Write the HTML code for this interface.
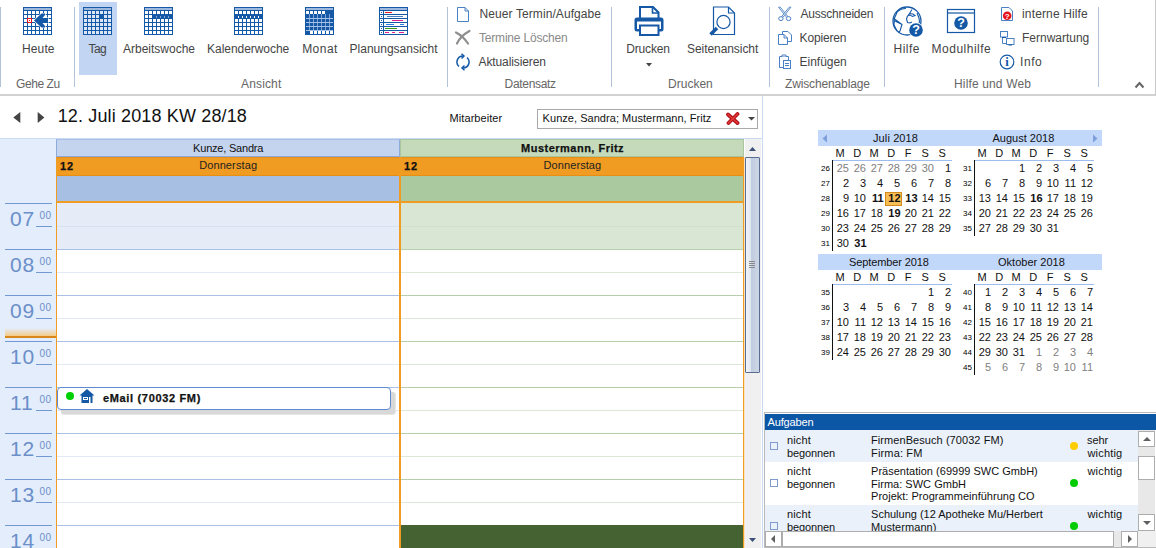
<!DOCTYPE html>
<html><head><meta charset="utf-8"><title>Kalender</title>
<style>
*{box-sizing:border-box;margin:0;padding:0}
html,body{width:1156px;height:548px;overflow:hidden;background:#fff}
body{position:relative;font-family:"Liberation Sans",sans-serif;font-size:12px;color:#444}
.abs{position:absolute}
.t{position:absolute;white-space:nowrap}
.sep{position:absolute;width:1px;background:#b3c3da;top:7px;height:80px}
.r{position:absolute}
</style></head><body>
<div class="r" style="left:0px;top:94px;width:1156px;height:2px;background:#d2d2d2;"></div>
<div class="r" style="left:1155px;top:0px;width:1px;height:95px;background:#c8c8c8;"></div>
<div class="sep" style="left:0px"></div>
<div class="sep" style="left:74px"></div>
<div class="sep" style="left:447px"></div>
<div class="sep" style="left:611px"></div>
<div class="sep" style="left:769px"></div>
<div class="sep" style="left:884px"></div>
<div class="sep" style="left:1098px"></div>
<div class="r" style="left:79px;top:2px;width:38px;height:73px;background:#c2d5f2;"></div>
<svg class="abs" style="left:23px;top:7px" width="29" height="28" viewBox="0 0 29 28" shape-rendering="crispEdges"><rect width="29" height="28" fill="#1458a6"/><rect x="1" y="1" width="27" height="2" fill="#9db9de"/><rect x="1" y="4" width="3" height="3" fill="#fff"/><rect x="5" y="4" width="3" height="3" fill="#fff"/><rect x="9" y="4" width="3" height="3" fill="#fff"/><rect x="13" y="4" width="3" height="3" fill="#fff"/><rect x="17" y="4" width="3" height="3" fill="#fff"/><rect x="21" y="4" width="3" height="3" fill="#fff"/><rect x="25" y="4" width="3" height="3" fill="#fff"/><rect x="1" y="8" width="3" height="3" fill="#fff"/><rect x="5" y="8" width="3" height="3" fill="#fff"/><rect x="9" y="8" width="3" height="3" fill="#fff"/><rect x="13" y="8" width="3" height="3" fill="#fff"/><rect x="17" y="8" width="3" height="3" fill="#fff"/><rect x="21" y="8" width="3" height="3" fill="#fff"/><rect x="25" y="8" width="3" height="3" fill="#fff"/><rect x="1" y="12" width="3" height="3" fill="#fff"/><rect x="5" y="12" width="3" height="3" fill="#fff"/><rect x="9" y="12" width="3" height="3" fill="#fff"/><rect x="13" y="12" width="3" height="3" fill="#fff"/><rect x="17" y="12" width="3" height="3" fill="#fff"/><rect x="21" y="12" width="3" height="3" fill="#fff"/><rect x="25" y="12" width="3" height="3" fill="#fff"/><rect x="1" y="16" width="3" height="3" fill="#fff"/><rect x="5" y="16" width="3" height="3" fill="#fff"/><rect x="9" y="16" width="3" height="3" fill="#fff"/><rect x="13" y="16" width="3" height="3" fill="#fff"/><rect x="17" y="16" width="3" height="3" fill="#fff"/><rect x="21" y="16" width="3" height="3" fill="#fff"/><rect x="25" y="16" width="3" height="3" fill="#fff"/><rect x="1" y="20" width="3" height="3" fill="#fff"/><rect x="5" y="20" width="3" height="3" fill="#fff"/><rect x="9" y="20" width="3" height="3" fill="#fff"/><rect x="13" y="20" width="3" height="3" fill="#fff"/><rect x="17" y="20" width="3" height="3" fill="#fff"/><rect x="21" y="20" width="3" height="3" fill="#fff"/><rect x="25" y="20" width="3" height="3" fill="#fff"/><rect x="1" y="24" width="3" height="3" fill="#fff"/><rect x="5" y="24" width="3" height="3" fill="#fff"/><rect x="9" y="24" width="3" height="3" fill="#fff"/><rect x="13" y="24" width="3" height="3" fill="#fff"/><rect x="17" y="24" width="3" height="3" fill="#fff"/><rect x="21" y="24" width="3" height="3" fill="#fff"/><rect x="25" y="24" width="3" height="3" fill="#fff"/><polygon shape-rendering="auto" points="11,13.5 18.5,6.5 22,6.5 22,8 19.5,11 25,11 25,16 19.5,16 22,19 22,20.5 18.5,20.5" fill="#1458a6" stroke="#fff" stroke-width="1.2" paint-order="stroke"/><rect x="4.5" y="11.5" width="4" height="4" fill="#fff" stroke="#e8141c" stroke-width="1"/><rect x="6" y="13" width="1" height="1" fill="#e8141c"/></svg>
<svg class="abs" style="left:83px;top:7px" width="29" height="28" viewBox="0 0 29 28" shape-rendering="crispEdges"><rect width="29" height="28" fill="#1458a6"/><rect x="1" y="1" width="27" height="2" fill="#9db9de"/><rect x="1" y="4" width="3" height="3" fill="#dbe6f7"/><rect x="5" y="4" width="3" height="3" fill="#dbe6f7"/><rect x="9" y="4" width="3" height="3" fill="#dbe6f7"/><rect x="13" y="4" width="3" height="3" fill="#dbe6f7"/><rect x="17" y="4" width="3" height="3" fill="#dbe6f7"/><rect x="21" y="4" width="3" height="3" fill="#dbe6f7"/><rect x="25" y="4" width="3" height="3" fill="#dbe6f7"/><rect x="1" y="8" width="3" height="3" fill="#dbe6f7"/><rect x="5" y="8" width="3" height="3" fill="#dbe6f7"/><rect x="9" y="8" width="3" height="3" fill="#dbe6f7"/><rect x="13" y="8" width="3" height="3" fill="#dbe6f7"/><rect x="21" y="8" width="3" height="3" fill="#dbe6f7"/><rect x="25" y="8" width="3" height="3" fill="#dbe6f7"/><rect x="1" y="12" width="3" height="3" fill="#dbe6f7"/><rect x="5" y="12" width="3" height="3" fill="#dbe6f7"/><rect x="9" y="12" width="3" height="3" fill="#dbe6f7"/><rect x="13" y="12" width="3" height="3" fill="#dbe6f7"/><rect x="17" y="12" width="3" height="3" fill="#dbe6f7"/><rect x="21" y="12" width="3" height="3" fill="#dbe6f7"/><rect x="25" y="12" width="3" height="3" fill="#dbe6f7"/><rect x="1" y="16" width="3" height="3" fill="#dbe6f7"/><rect x="5" y="16" width="3" height="3" fill="#dbe6f7"/><rect x="9" y="16" width="3" height="3" fill="#dbe6f7"/><rect x="13" y="16" width="3" height="3" fill="#dbe6f7"/><rect x="17" y="16" width="3" height="3" fill="#dbe6f7"/><rect x="21" y="16" width="3" height="3" fill="#dbe6f7"/><rect x="25" y="16" width="3" height="3" fill="#dbe6f7"/><rect x="1" y="20" width="3" height="3" fill="#dbe6f7"/><rect x="5" y="20" width="3" height="3" fill="#dbe6f7"/><rect x="9" y="20" width="3" height="3" fill="#dbe6f7"/><rect x="13" y="20" width="3" height="3" fill="#dbe6f7"/><rect x="17" y="20" width="3" height="3" fill="#dbe6f7"/><rect x="21" y="20" width="3" height="3" fill="#dbe6f7"/><rect x="25" y="20" width="3" height="3" fill="#dbe6f7"/><rect x="1" y="24" width="3" height="3" fill="#dbe6f7"/><rect x="5" y="24" width="3" height="3" fill="#dbe6f7"/><rect x="9" y="24" width="3" height="3" fill="#dbe6f7"/><rect x="13" y="24" width="3" height="3" fill="#dbe6f7"/><rect x="17" y="24" width="3" height="3" fill="#dbe6f7"/><rect x="21" y="24" width="3" height="3" fill="#dbe6f7"/><rect x="25" y="24" width="3" height="3" fill="#dbe6f7"/></svg>
<svg class="abs" style="left:144px;top:7px" width="29" height="28" viewBox="0 0 29 28" shape-rendering="crispEdges"><rect width="29" height="28" fill="#1458a6"/><rect x="1" y="1" width="27" height="2" fill="#9db9de"/><rect x="1" y="4" width="3" height="3" fill="#fff"/><rect x="5" y="4" width="3" height="3" fill="#fff"/><rect x="9" y="4" width="3" height="3" fill="#fff"/><rect x="13" y="4" width="3" height="3" fill="#fff"/><rect x="17" y="4" width="3" height="3" fill="#fff"/><rect x="21" y="4" width="3" height="3" fill="#fff"/><rect x="25" y="4" width="3" height="3" fill="#fff"/><rect x="1" y="8" width="3" height="3" fill="#fff"/><rect x="5" y="8" width="3" height="3" fill="#fff"/><rect x="1" y="12" width="3" height="3" fill="#fff"/><rect x="5" y="12" width="3" height="3" fill="#fff"/><rect x="9" y="12" width="3" height="3" fill="#fff"/><rect x="13" y="12" width="3" height="3" fill="#fff"/><rect x="17" y="12" width="3" height="3" fill="#fff"/><rect x="21" y="12" width="3" height="3" fill="#fff"/><rect x="25" y="12" width="3" height="3" fill="#fff"/><rect x="1" y="16" width="3" height="3" fill="#fff"/><rect x="5" y="16" width="3" height="3" fill="#fff"/><rect x="9" y="16" width="3" height="3" fill="#fff"/><rect x="13" y="16" width="3" height="3" fill="#fff"/><rect x="17" y="16" width="3" height="3" fill="#fff"/><rect x="21" y="16" width="3" height="3" fill="#fff"/><rect x="25" y="16" width="3" height="3" fill="#fff"/><rect x="1" y="20" width="3" height="3" fill="#fff"/><rect x="5" y="20" width="3" height="3" fill="#fff"/><rect x="9" y="20" width="3" height="3" fill="#fff"/><rect x="13" y="20" width="3" height="3" fill="#fff"/><rect x="17" y="20" width="3" height="3" fill="#fff"/><rect x="21" y="20" width="3" height="3" fill="#fff"/><rect x="25" y="20" width="3" height="3" fill="#fff"/><rect x="1" y="24" width="3" height="3" fill="#fff"/><rect x="5" y="24" width="3" height="3" fill="#fff"/><rect x="9" y="24" width="3" height="3" fill="#fff"/><rect x="13" y="24" width="3" height="3" fill="#fff"/><rect x="17" y="24" width="3" height="3" fill="#fff"/><rect x="21" y="24" width="3" height="3" fill="#fff"/><rect x="25" y="24" width="3" height="3" fill="#fff"/><rect x="12" y="9" width="1" height="2" fill="#7fa3d4"/><rect x="16" y="9" width="1" height="2" fill="#7fa3d4"/><rect x="20" y="9" width="1" height="2" fill="#7fa3d4"/><rect x="24" y="9" width="1" height="2" fill="#7fa3d4"/></svg>
<svg class="abs" style="left:234px;top:7px" width="29" height="28" viewBox="0 0 29 28" shape-rendering="crispEdges"><rect width="29" height="28" fill="#1458a6"/><rect x="1" y="1" width="27" height="2" fill="#9db9de"/><rect x="1" y="4" width="3" height="3" fill="#fff"/><rect x="5" y="4" width="3" height="3" fill="#fff"/><rect x="9" y="4" width="3" height="3" fill="#fff"/><rect x="13" y="4" width="3" height="3" fill="#fff"/><rect x="17" y="4" width="3" height="3" fill="#fff"/><rect x="21" y="4" width="3" height="3" fill="#fff"/><rect x="25" y="4" width="3" height="3" fill="#fff"/><rect x="1" y="12" width="3" height="3" fill="#fff"/><rect x="5" y="12" width="3" height="3" fill="#fff"/><rect x="9" y="12" width="3" height="3" fill="#fff"/><rect x="13" y="12" width="3" height="3" fill="#fff"/><rect x="17" y="12" width="3" height="3" fill="#fff"/><rect x="21" y="12" width="3" height="3" fill="#fff"/><rect x="25" y="12" width="3" height="3" fill="#fff"/><rect x="1" y="16" width="3" height="3" fill="#fff"/><rect x="5" y="16" width="3" height="3" fill="#fff"/><rect x="9" y="16" width="3" height="3" fill="#fff"/><rect x="13" y="16" width="3" height="3" fill="#fff"/><rect x="17" y="16" width="3" height="3" fill="#fff"/><rect x="21" y="16" width="3" height="3" fill="#fff"/><rect x="25" y="16" width="3" height="3" fill="#fff"/><rect x="1" y="20" width="3" height="3" fill="#fff"/><rect x="5" y="20" width="3" height="3" fill="#fff"/><rect x="9" y="20" width="3" height="3" fill="#fff"/><rect x="13" y="20" width="3" height="3" fill="#fff"/><rect x="17" y="20" width="3" height="3" fill="#fff"/><rect x="21" y="20" width="3" height="3" fill="#fff"/><rect x="25" y="20" width="3" height="3" fill="#fff"/><rect x="1" y="24" width="3" height="3" fill="#fff"/><rect x="5" y="24" width="3" height="3" fill="#fff"/><rect x="9" y="24" width="3" height="3" fill="#fff"/><rect x="13" y="24" width="3" height="3" fill="#fff"/><rect x="17" y="24" width="3" height="3" fill="#fff"/><rect x="21" y="24" width="3" height="3" fill="#fff"/><rect x="25" y="24" width="3" height="3" fill="#fff"/><rect x="4" y="9" width="1" height="2" fill="#fff"/><rect x="8" y="9" width="1" height="2" fill="#fff"/><rect x="12" y="9" width="1" height="2" fill="#fff"/><rect x="16" y="9" width="1" height="2" fill="#fff"/><rect x="20" y="9" width="1" height="2" fill="#fff"/><rect x="24" y="9" width="1" height="2" fill="#fff"/></svg>
<svg class="abs" style="left:305px;top:7px" width="29" height="28" viewBox="0 0 29 28" shape-rendering="crispEdges"><rect width="29" height="28" fill="#1458a6"/><rect x="1" y="1" width="27" height="2" fill="#9db9de"/><rect x="1" y="4" width="3" height="3" fill="#fff"/><rect x="5" y="4" width="3" height="3" fill="#fff"/><rect x="9" y="4" width="3" height="3" fill="#fff"/><rect x="13" y="4" width="3" height="3" fill="#fff"/><rect x="17" y="4" width="3" height="3" fill="#fff"/><rect x="5" y="24" width="3" height="3" fill="#fff"/><rect x="9" y="24" width="3" height="3" fill="#fff"/><rect x="13" y="24" width="3" height="3" fill="#fff"/><rect x="17" y="24" width="3" height="3" fill="#fff"/><rect x="21" y="24" width="3" height="3" fill="#fff"/><rect x="25" y="24" width="3" height="3" fill="#fff"/><rect x="4" y="7" width="1" height="17" fill="#7fa5d8"/><rect x="8" y="7" width="1" height="17" fill="#7fa5d8"/><rect x="12" y="7" width="1" height="17" fill="#7fa5d8"/><rect x="16" y="7" width="1" height="17" fill="#7fa5d8"/><rect x="20" y="7" width="1" height="17" fill="#7fa5d8"/><rect x="24" y="7" width="1" height="17" fill="#7fa5d8"/><rect x="1" y="11" width="27" height="1" fill="#a9c3e6"/><rect x="1" y="15" width="27" height="1" fill="#a9c3e6"/><rect x="1" y="19" width="27" height="1" fill="#a9c3e6"/><rect x="1" y="23" width="27" height="1" fill="#a9c3e6"/></svg>
<svg class="abs" style="left:379px;top:7px" width="29" height="28" viewBox="0 0 29 28" shape-rendering="crispEdges"><rect width="29" height="28" fill="#1458a6"/><rect x="1" y="1" width="27" height="2" fill="#9db9de"/><rect x="1" y="4" width="3" height="3" fill="#fff"/><rect x="2" y="5" width="1" height="1" fill="#1458a6"/><rect x="5" y="4" width="23" height="3" fill="#fff"/><rect x="6" y="5" width="7" height="1" fill="#f01818"/><rect x="1" y="8" width="3" height="3" fill="#fff"/><rect x="2" y="9" width="1" height="1" fill="#1458a6"/><rect x="5" y="8" width="23" height="3" fill="#fff"/><rect x="8" y="9" width="16" height="1" fill="#4a7fc1"/><rect x="1" y="12" width="3" height="3" fill="#fff"/><rect x="2" y="13" width="1" height="1" fill="#1458a6"/><rect x="5" y="12" width="23" height="3" fill="#fff"/><rect x="13" y="13" width="11" height="1" fill="#e0208c"/><rect x="1" y="16" width="3" height="3" fill="#fff"/><rect x="2" y="17" width="1" height="1" fill="#1458a6"/><rect x="5" y="16" width="23" height="3" fill="#fff"/><rect x="7" y="17" width="8" height="1" fill="#2a7de0"/><rect x="21" y="17" width="4" height="1" fill="#2a7de0"/><rect x="1" y="20" width="3" height="3" fill="#fff"/><rect x="2" y="21" width="1" height="1" fill="#1458a6"/><rect x="5" y="20" width="23" height="3" fill="#fff"/><rect x="6" y="21" width="12" height="1" fill="#3a9a1a"/><rect x="1" y="24" width="3" height="3" fill="#fff"/><rect x="2" y="25" width="1" height="1" fill="#1458a6"/><rect x="5" y="24" width="23" height="3" fill="#fff"/><rect x="6" y="25" width="4" height="1" fill="#e0208c"/><rect x="13" y="25" width="3" height="1" fill="#e0208c"/><rect x="20" y="25" width="5" height="1" fill="#e0208c"/></svg>
<svg class="abs" style="left:12px;top:111px" width="36" height="14" viewBox="0 0 36 14"><polygon points="1.3,6.5 8.3,1 8.3,12" fill="#444"/><polygon points="32.4,6.5 25.7,1 25.7,12" fill="#444"/></svg>
<div class="r" style="left:537px;top:109px;width:221px;height:20px;background:#fff;border:1px solid #a9a9a9"></div>
<svg class="abs" style="left:726px;top:112px" width="14" height="13" viewBox="0 0 14 13"><path d="M2 2.5 L11.5 11 M11.5 2 L2.5 11" stroke="#b01218" stroke-width="3.8" stroke-linecap="round"/><path d="M2 2.5 L11.5 11 M11.5 2 L2.5 11" stroke="#e23a3a" stroke-width="1.6" stroke-linecap="round"/></svg>
<svg class="abs" style="left:748px;top:117px" width="7" height="4" viewBox="0 0 7 4"><polygon points="0,0 7,0 3.5,3.5" fill="#444"/></svg>
<div class="r" style="left:0px;top:138px;width:762px;height:1px;background:#c9daf3;"></div>
<div class="r" style="left:0px;top:139px;width:56px;height:409px;background:#e3edfb;"></div>
<div class="r" style="left:56px;top:139px;width:344px;height:18px;background:#c4d4ee;border-top:1px solid #a9c0e6;border-left:1px solid #8eaadb;border-bottom:1px solid #8eaadb;border-right:1px solid #8eaadb"></div>
<div class="r" style="left:400px;top:139px;width:344px;height:18px;background:#c4dabb;border:1px solid #a9c69e"></div>
<div class="r" style="left:56px;top:157px;width:689px;height:19px;background:#f09b21;border-top:1px solid #e78f14;border-bottom:1px solid #e78f14"></div>
<div class="r" style="left:399px;top:157px;width:2px;height:19px;background:#e78f14;"></div>
<div class="r" style="left:57px;top:176px;width:342px;height:26px;background:#a6bfe3;"></div>
<div class="r" style="left:401px;top:176px;width:343px;height:26px;background:#abc99f;"></div>
<div class="r" style="left:56px;top:201px;width:689px;height:2px;background:#f09b21;"></div>
<div class="r" style="left:57px;top:203px;width:342px;height:345px;background:#fff;"></div>
<div class="r" style="left:401px;top:203px;width:343px;height:345px;background:#fff;"></div>
<div class="r" style="left:57px;top:203px;width:342px;height:46px;background:#e6ecf7;"></div>
<div class="r" style="left:401px;top:203px;width:343px;height:46px;background:#d9e6d3;"></div>
<div class="r" style="left:57px;top:226px;width:342px;height:1px;background:#d6e1f1;"></div>
<div class="r" style="left:401px;top:226px;width:343px;height:1px;background:#cfdfc8;"></div>
<div class="r" style="left:5px;top:203px;width:47px;height:1px;background:#7199d2;"></div>
<div class="r" style="left:36px;top:226px;width:16px;height:1px;background:#7199d2;"></div>
<div class="r" style="left:57px;top:249px;width:342px;height:1px;background:#a9c1e4;"></div>
<div class="r" style="left:401px;top:249px;width:343px;height:1px;background:#b4cfa9;"></div>
<div class="r" style="left:57px;top:272px;width:342px;height:1px;background:#e0e9f5;"></div>
<div class="r" style="left:401px;top:272px;width:343px;height:1px;background:#dbe8d5;"></div>
<div class="r" style="left:5px;top:249px;width:47px;height:1px;background:#7199d2;"></div>
<div class="r" style="left:36px;top:272px;width:16px;height:1px;background:#7199d2;"></div>
<div class="r" style="left:57px;top:295px;width:342px;height:1px;background:#a9c1e4;"></div>
<div class="r" style="left:401px;top:295px;width:343px;height:1px;background:#b4cfa9;"></div>
<div class="r" style="left:57px;top:318px;width:342px;height:1px;background:#e0e9f5;"></div>
<div class="r" style="left:401px;top:318px;width:343px;height:1px;background:#dbe8d5;"></div>
<div class="r" style="left:5px;top:295px;width:47px;height:1px;background:#7199d2;"></div>
<div class="r" style="left:36px;top:318px;width:16px;height:1px;background:#7199d2;"></div>
<div class="r" style="left:57px;top:341px;width:342px;height:1px;background:#a9c1e4;"></div>
<div class="r" style="left:401px;top:341px;width:343px;height:1px;background:#b4cfa9;"></div>
<div class="r" style="left:57px;top:364px;width:342px;height:1px;background:#e0e9f5;"></div>
<div class="r" style="left:401px;top:364px;width:343px;height:1px;background:#dbe8d5;"></div>
<div class="r" style="left:5px;top:341px;width:47px;height:1px;background:#7199d2;"></div>
<div class="r" style="left:36px;top:364px;width:16px;height:1px;background:#7199d2;"></div>
<div class="r" style="left:57px;top:387px;width:342px;height:1px;background:#a9c1e4;"></div>
<div class="r" style="left:401px;top:387px;width:343px;height:1px;background:#b4cfa9;"></div>
<div class="r" style="left:57px;top:410px;width:342px;height:1px;background:#e0e9f5;"></div>
<div class="r" style="left:401px;top:410px;width:343px;height:1px;background:#dbe8d5;"></div>
<div class="r" style="left:5px;top:387px;width:47px;height:1px;background:#7199d2;"></div>
<div class="r" style="left:36px;top:410px;width:16px;height:1px;background:#7199d2;"></div>
<div class="r" style="left:57px;top:433px;width:342px;height:1px;background:#a9c1e4;"></div>
<div class="r" style="left:401px;top:433px;width:343px;height:1px;background:#b4cfa9;"></div>
<div class="r" style="left:57px;top:456px;width:342px;height:1px;background:#e0e9f5;"></div>
<div class="r" style="left:401px;top:456px;width:343px;height:1px;background:#dbe8d5;"></div>
<div class="r" style="left:5px;top:433px;width:47px;height:1px;background:#7199d2;"></div>
<div class="r" style="left:36px;top:456px;width:16px;height:1px;background:#7199d2;"></div>
<div class="r" style="left:57px;top:479px;width:342px;height:1px;background:#a9c1e4;"></div>
<div class="r" style="left:401px;top:479px;width:343px;height:1px;background:#b4cfa9;"></div>
<div class="r" style="left:57px;top:502px;width:342px;height:1px;background:#e0e9f5;"></div>
<div class="r" style="left:401px;top:502px;width:343px;height:1px;background:#dbe8d5;"></div>
<div class="r" style="left:5px;top:479px;width:47px;height:1px;background:#7199d2;"></div>
<div class="r" style="left:36px;top:502px;width:16px;height:1px;background:#7199d2;"></div>
<div class="r" style="left:57px;top:525px;width:342px;height:1px;background:#a9c1e4;"></div>
<div class="r" style="left:401px;top:525px;width:343px;height:1px;background:#b4cfa9;"></div>
<div class="r" style="left:5px;top:525px;width:47px;height:1px;background:#7199d2;"></div>
<div class="r" style="left:401px;top:525px;width:343px;height:23px;background:#456332;"></div>
<div class="r" style="left:56px;top:157px;width:1px;height:391px;background:#f09b21;"></div>
<div class="r" style="left:399px;top:157px;width:2px;height:391px;background:#f09b21;"></div>
<div class="r" style="left:743px;top:157px;width:1px;height:391px;background:#f09b21;"></div>
<div class="r" style="left:744px;top:157px;width:1px;height:391px;background:#fbe3c0;"></div>
<div class="r" style="left:5px;top:328px;width:51px;height:9px;background:linear-gradient(#e3edfb,#f7c77a);"></div>
<div class="r" style="left:5px;top:336px;width:51px;height:2px;background:#d9861a;"></div>
<div class="r" style="left:61px;top:392px;width:335px;height:23px;background:#e6e6e6;border-radius:3px"></div>
<div class="r" style="left:61px;top:392px;width:334px;height:22px;background:#d8d8d8;border-radius:3px"></div>
<div class="r" style="left:57px;top:387px;width:334px;height:23px;background:#fff;border:1px solid #5d8ad0;border-radius:4px"></div>
<div class="r" style="left:66px;top:392px;width:8px;height:8px;background:#00d000;border-radius:50%"></div>
<svg class="abs" style="left:79px;top:389px" width="16" height="14" viewBox="0 0 16 14"><polygon points="8,0 0.5,6.5 15.5,6.5" fill="#1458a6"/><rect x="2.5" y="6" width="11" height="8" fill="#1458a6"/><rect x="4" y="8" width="5" height="3" fill="#fff"/><rect x="5" y="9" width="3" height="1" fill="#1458a6"/><rect x="10" y="8" width="1.5" height="6" fill="#fff"/></svg>
<div class="r" style="left:745px;top:139px;width:16px;height:409px;background:#f0f0f0;"></div>
<svg class="abs" style="left:749px;top:147px" width="7" height="4" viewBox="0 0 7 4"><polygon points="0,4 7,4 3.5,0" fill="#3d4f78"/></svg>
<svg class="abs" style="left:749px;top:538px" width="7" height="4" viewBox="0 0 7 4"><polygon points="0,0 7,0 3.5,4" fill="#3d4f78"/></svg>
<div class="r" style="left:745px;top:157px;width:15px;height:216px;background:linear-gradient(90deg,#f3f6fa 0,#dfe6f0 38%,#c0ccdf 42%,#ccd6e6 100%);border:1px solid #5a6c90;border-radius:1px"></div>
<div class="r" style="left:749px;top:261px;width:6px;height:1px;background:#8a8a8a;"></div>
<div class="r" style="left:749px;top:263px;width:6px;height:1px;background:#8a8a8a;"></div>
<div class="r" style="left:749px;top:265px;width:6px;height:1px;background:#8a8a8a;"></div>
<div class="r" style="left:749px;top:267px;width:6px;height:1px;background:#8a8a8a;"></div>
<div class="r" style="left:762px;top:96px;width:1px;height:452px;background:#c9daf3;"></div>
<div class="r" style="left:818px;top:130px;width:284px;height:16px;background:#c1d8fb;"></div>
<span class="t" style="left:833.2px;top:146.69px;width:14px;text-align:center;font-size:11px;line-height:13px;font-weight:400;color:#111">M</span>
<span class="t" style="left:850.2px;top:146.69px;width:14px;text-align:center;font-size:11px;line-height:13px;font-weight:400;color:#111">D</span>
<span class="t" style="left:867.2px;top:146.69px;width:14px;text-align:center;font-size:11px;line-height:13px;font-weight:400;color:#111">M</span>
<span class="t" style="left:884.2px;top:146.69px;width:14px;text-align:center;font-size:11px;line-height:13px;font-weight:400;color:#111">D</span>
<span class="t" style="left:901.2px;top:146.69px;width:14px;text-align:center;font-size:11px;line-height:13px;font-weight:400;color:#111">F</span>
<span class="t" style="left:918.2px;top:146.69px;width:14px;text-align:center;font-size:11px;line-height:13px;font-weight:400;color:#111">S</span>
<span class="t" style="left:935.2px;top:146.69px;width:14px;text-align:center;font-size:11px;line-height:13px;font-weight:400;color:#111">S</span>
<div class="r" style="left:832px;top:160px;width:120px;height:1px;background:#9dbdf0;"></div>
<div class="r" style="left:832px;top:160px;width:1px;height:91px;background:#111;"></div>
<span class="t" style="left:819.0px;top:163.73px;width:11px;text-align:right;font-size:8px;line-height:10px;font-weight:400;color:#000">26</span>
<span class="t" style="left:829.0px;top:161.69px;width:20px;text-align:right;font-size:11px;line-height:13px;font-weight:400;color:#808080">25</span>
<span class="t" style="left:846.0px;top:161.69px;width:20px;text-align:right;font-size:11px;line-height:13px;font-weight:400;color:#808080">26</span>
<span class="t" style="left:863.0px;top:161.69px;width:20px;text-align:right;font-size:11px;line-height:13px;font-weight:400;color:#808080">27</span>
<span class="t" style="left:880.0px;top:161.69px;width:20px;text-align:right;font-size:11px;line-height:13px;font-weight:400;color:#808080">28</span>
<span class="t" style="left:897.0px;top:161.69px;width:20px;text-align:right;font-size:11px;line-height:13px;font-weight:400;color:#808080">29</span>
<span class="t" style="left:914.0px;top:161.69px;width:20px;text-align:right;font-size:11px;line-height:13px;font-weight:400;color:#808080">30</span>
<span class="t" style="left:931.0px;top:161.69px;width:20px;text-align:right;font-size:11px;line-height:13px;font-weight:400;color:#111">1</span>
<span class="t" style="left:819.0px;top:178.73px;width:11px;text-align:right;font-size:8px;line-height:10px;font-weight:400;color:#000">27</span>
<span class="t" style="left:829.0px;top:176.69px;width:20px;text-align:right;font-size:11px;line-height:13px;font-weight:400;color:#111">2</span>
<span class="t" style="left:846.0px;top:176.69px;width:20px;text-align:right;font-size:11px;line-height:13px;font-weight:400;color:#111">3</span>
<span class="t" style="left:863.0px;top:176.69px;width:20px;text-align:right;font-size:11px;line-height:13px;font-weight:400;color:#111">4</span>
<span class="t" style="left:880.0px;top:176.69px;width:20px;text-align:right;font-size:11px;line-height:13px;font-weight:400;color:#111">5</span>
<span class="t" style="left:897.0px;top:176.69px;width:20px;text-align:right;font-size:11px;line-height:13px;font-weight:400;color:#111">6</span>
<span class="t" style="left:914.0px;top:176.69px;width:20px;text-align:right;font-size:11px;line-height:13px;font-weight:400;color:#111">7</span>
<span class="t" style="left:931.0px;top:176.69px;width:20px;text-align:right;font-size:11px;line-height:13px;font-weight:400;color:#111">8</span>
<span class="t" style="left:819.0px;top:193.73px;width:11px;text-align:right;font-size:8px;line-height:10px;font-weight:400;color:#000">28</span>
<span class="t" style="left:829.0px;top:191.69px;width:20px;text-align:right;font-size:11px;line-height:13px;font-weight:400;color:#111">9</span>
<span class="t" style="left:846.0px;top:191.69px;width:20px;text-align:right;font-size:11px;line-height:13px;font-weight:400;color:#111">10</span>
<span class="t" style="left:863.0px;top:191.69px;width:20.6px;text-align:right;font-size:11px;line-height:13px;font-weight:700;color:#111">11</span>
<div class="r" style="left:884.5px;top:191.5px;width:17px;height:14.5px;background:#f7bd55;border:1px solid #d58a1c"></div>
<span class="t" style="left:880.0px;top:191.69px;width:20.6px;text-align:right;font-size:11px;line-height:13px;font-weight:700;color:#111">12</span>
<span class="t" style="left:897.0px;top:191.69px;width:20.6px;text-align:right;font-size:11px;line-height:13px;font-weight:700;color:#111">13</span>
<span class="t" style="left:914.0px;top:191.69px;width:20px;text-align:right;font-size:11px;line-height:13px;font-weight:400;color:#111">14</span>
<span class="t" style="left:931.0px;top:191.69px;width:20px;text-align:right;font-size:11px;line-height:13px;font-weight:400;color:#111">15</span>
<span class="t" style="left:819.0px;top:208.73px;width:11px;text-align:right;font-size:8px;line-height:10px;font-weight:400;color:#000">29</span>
<span class="t" style="left:829.0px;top:206.69px;width:20px;text-align:right;font-size:11px;line-height:13px;font-weight:400;color:#111">16</span>
<span class="t" style="left:846.0px;top:206.69px;width:20px;text-align:right;font-size:11px;line-height:13px;font-weight:400;color:#111">17</span>
<span class="t" style="left:863.0px;top:206.69px;width:20px;text-align:right;font-size:11px;line-height:13px;font-weight:400;color:#111">18</span>
<span class="t" style="left:880.0px;top:206.69px;width:20.6px;text-align:right;font-size:11px;line-height:13px;font-weight:700;color:#111">19</span>
<span class="t" style="left:897.0px;top:206.69px;width:20px;text-align:right;font-size:11px;line-height:13px;font-weight:400;color:#111">20</span>
<span class="t" style="left:914.0px;top:206.69px;width:20px;text-align:right;font-size:11px;line-height:13px;font-weight:400;color:#111">21</span>
<span class="t" style="left:931.0px;top:206.69px;width:20px;text-align:right;font-size:11px;line-height:13px;font-weight:400;color:#111">22</span>
<span class="t" style="left:819.0px;top:223.73px;width:11px;text-align:right;font-size:8px;line-height:10px;font-weight:400;color:#000">30</span>
<span class="t" style="left:829.0px;top:221.69px;width:20px;text-align:right;font-size:11px;line-height:13px;font-weight:400;color:#111">23</span>
<span class="t" style="left:846.0px;top:221.69px;width:20px;text-align:right;font-size:11px;line-height:13px;font-weight:400;color:#111">24</span>
<span class="t" style="left:863.0px;top:221.69px;width:20px;text-align:right;font-size:11px;line-height:13px;font-weight:400;color:#111">25</span>
<span class="t" style="left:880.0px;top:221.69px;width:20px;text-align:right;font-size:11px;line-height:13px;font-weight:400;color:#111">26</span>
<span class="t" style="left:897.0px;top:221.69px;width:20px;text-align:right;font-size:11px;line-height:13px;font-weight:400;color:#111">27</span>
<span class="t" style="left:914.0px;top:221.69px;width:20px;text-align:right;font-size:11px;line-height:13px;font-weight:400;color:#111">28</span>
<span class="t" style="left:931.0px;top:221.69px;width:20px;text-align:right;font-size:11px;line-height:13px;font-weight:400;color:#111">29</span>
<span class="t" style="left:819.0px;top:238.73px;width:11px;text-align:right;font-size:8px;line-height:10px;font-weight:400;color:#000">31</span>
<span class="t" style="left:829.0px;top:236.69px;width:20px;text-align:right;font-size:11px;line-height:13px;font-weight:400;color:#111">30</span>
<span class="t" style="left:846.0px;top:236.69px;width:20.6px;text-align:right;font-size:11px;line-height:13px;font-weight:700;color:#111">31</span>
<span class="t" style="left:975.2px;top:146.69px;width:14px;text-align:center;font-size:11px;line-height:13px;font-weight:400;color:#111">M</span>
<span class="t" style="left:992.2px;top:146.69px;width:14px;text-align:center;font-size:11px;line-height:13px;font-weight:400;color:#111">D</span>
<span class="t" style="left:1009.2px;top:146.69px;width:14px;text-align:center;font-size:11px;line-height:13px;font-weight:400;color:#111">M</span>
<span class="t" style="left:1026.2px;top:146.69px;width:14px;text-align:center;font-size:11px;line-height:13px;font-weight:400;color:#111">D</span>
<span class="t" style="left:1043.2px;top:146.69px;width:14px;text-align:center;font-size:11px;line-height:13px;font-weight:400;color:#111">F</span>
<span class="t" style="left:1060.2px;top:146.69px;width:14px;text-align:center;font-size:11px;line-height:13px;font-weight:400;color:#111">S</span>
<span class="t" style="left:1077.2px;top:146.69px;width:14px;text-align:center;font-size:11px;line-height:13px;font-weight:400;color:#111">S</span>
<div class="r" style="left:974px;top:160px;width:120px;height:1px;background:#9dbdf0;"></div>
<div class="r" style="left:974px;top:160px;width:1px;height:76px;background:#111;"></div>
<span class="t" style="left:961.0px;top:163.73px;width:11px;text-align:right;font-size:8px;line-height:10px;font-weight:400;color:#000">31</span>
<span class="t" style="left:1005.0px;top:161.69px;width:20px;text-align:right;font-size:11px;line-height:13px;font-weight:400;color:#111">1</span>
<span class="t" style="left:1022.0px;top:161.69px;width:20px;text-align:right;font-size:11px;line-height:13px;font-weight:400;color:#111">2</span>
<span class="t" style="left:1039.0px;top:161.69px;width:20px;text-align:right;font-size:11px;line-height:13px;font-weight:400;color:#111">3</span>
<span class="t" style="left:1056.0px;top:161.69px;width:20px;text-align:right;font-size:11px;line-height:13px;font-weight:400;color:#111">4</span>
<span class="t" style="left:1073.0px;top:161.69px;width:20px;text-align:right;font-size:11px;line-height:13px;font-weight:400;color:#111">5</span>
<span class="t" style="left:961.0px;top:178.73px;width:11px;text-align:right;font-size:8px;line-height:10px;font-weight:400;color:#000">32</span>
<span class="t" style="left:971.0px;top:176.69px;width:20px;text-align:right;font-size:11px;line-height:13px;font-weight:400;color:#111">6</span>
<span class="t" style="left:988.0px;top:176.69px;width:20px;text-align:right;font-size:11px;line-height:13px;font-weight:400;color:#111">7</span>
<span class="t" style="left:1005.0px;top:176.69px;width:20px;text-align:right;font-size:11px;line-height:13px;font-weight:400;color:#111">8</span>
<span class="t" style="left:1022.0px;top:176.69px;width:20px;text-align:right;font-size:11px;line-height:13px;font-weight:400;color:#111">9</span>
<span class="t" style="left:1039.0px;top:176.69px;width:20px;text-align:right;font-size:11px;line-height:13px;font-weight:400;color:#111">10</span>
<span class="t" style="left:1056.0px;top:176.69px;width:20px;text-align:right;font-size:11px;line-height:13px;font-weight:400;color:#111">11</span>
<span class="t" style="left:1073.0px;top:176.69px;width:20px;text-align:right;font-size:11px;line-height:13px;font-weight:400;color:#111">12</span>
<span class="t" style="left:961.0px;top:193.73px;width:11px;text-align:right;font-size:8px;line-height:10px;font-weight:400;color:#000">33</span>
<span class="t" style="left:971.0px;top:191.69px;width:20px;text-align:right;font-size:11px;line-height:13px;font-weight:400;color:#111">13</span>
<span class="t" style="left:988.0px;top:191.69px;width:20px;text-align:right;font-size:11px;line-height:13px;font-weight:400;color:#111">14</span>
<span class="t" style="left:1005.0px;top:191.69px;width:20px;text-align:right;font-size:11px;line-height:13px;font-weight:400;color:#111">15</span>
<span class="t" style="left:1022.0px;top:191.69px;width:20.6px;text-align:right;font-size:11px;line-height:13px;font-weight:700;color:#111">16</span>
<span class="t" style="left:1039.0px;top:191.69px;width:20px;text-align:right;font-size:11px;line-height:13px;font-weight:400;color:#111">17</span>
<span class="t" style="left:1056.0px;top:191.69px;width:20px;text-align:right;font-size:11px;line-height:13px;font-weight:400;color:#111">18</span>
<span class="t" style="left:1073.0px;top:191.69px;width:20px;text-align:right;font-size:11px;line-height:13px;font-weight:400;color:#111">19</span>
<span class="t" style="left:961.0px;top:208.73px;width:11px;text-align:right;font-size:8px;line-height:10px;font-weight:400;color:#000">34</span>
<span class="t" style="left:971.0px;top:206.69px;width:20px;text-align:right;font-size:11px;line-height:13px;font-weight:400;color:#111">20</span>
<span class="t" style="left:988.0px;top:206.69px;width:20px;text-align:right;font-size:11px;line-height:13px;font-weight:400;color:#111">21</span>
<span class="t" style="left:1005.0px;top:206.69px;width:20px;text-align:right;font-size:11px;line-height:13px;font-weight:400;color:#111">22</span>
<span class="t" style="left:1022.0px;top:206.69px;width:20px;text-align:right;font-size:11px;line-height:13px;font-weight:400;color:#111">23</span>
<span class="t" style="left:1039.0px;top:206.69px;width:20px;text-align:right;font-size:11px;line-height:13px;font-weight:400;color:#111">24</span>
<span class="t" style="left:1056.0px;top:206.69px;width:20px;text-align:right;font-size:11px;line-height:13px;font-weight:400;color:#111">25</span>
<span class="t" style="left:1073.0px;top:206.69px;width:20px;text-align:right;font-size:11px;line-height:13px;font-weight:400;color:#111">26</span>
<span class="t" style="left:961.0px;top:223.73px;width:11px;text-align:right;font-size:8px;line-height:10px;font-weight:400;color:#000">35</span>
<span class="t" style="left:971.0px;top:221.69px;width:20px;text-align:right;font-size:11px;line-height:13px;font-weight:400;color:#111">27</span>
<span class="t" style="left:988.0px;top:221.69px;width:20px;text-align:right;font-size:11px;line-height:13px;font-weight:400;color:#111">28</span>
<span class="t" style="left:1005.0px;top:221.69px;width:20px;text-align:right;font-size:11px;line-height:13px;font-weight:400;color:#111">29</span>
<span class="t" style="left:1022.0px;top:221.69px;width:20px;text-align:right;font-size:11px;line-height:13px;font-weight:400;color:#111">30</span>
<span class="t" style="left:1039.0px;top:221.69px;width:20px;text-align:right;font-size:11px;line-height:13px;font-weight:400;color:#111">31</span>
<div class="r" style="left:818px;top:254px;width:284px;height:16px;background:#c1d8fb;"></div>
<span class="t" style="left:833.2px;top:270.69px;width:14px;text-align:center;font-size:11px;line-height:13px;font-weight:400;color:#111">M</span>
<span class="t" style="left:850.2px;top:270.69px;width:14px;text-align:center;font-size:11px;line-height:13px;font-weight:400;color:#111">D</span>
<span class="t" style="left:867.2px;top:270.69px;width:14px;text-align:center;font-size:11px;line-height:13px;font-weight:400;color:#111">M</span>
<span class="t" style="left:884.2px;top:270.69px;width:14px;text-align:center;font-size:11px;line-height:13px;font-weight:400;color:#111">D</span>
<span class="t" style="left:901.2px;top:270.69px;width:14px;text-align:center;font-size:11px;line-height:13px;font-weight:400;color:#111">F</span>
<span class="t" style="left:918.2px;top:270.69px;width:14px;text-align:center;font-size:11px;line-height:13px;font-weight:400;color:#111">S</span>
<span class="t" style="left:935.2px;top:270.69px;width:14px;text-align:center;font-size:11px;line-height:13px;font-weight:400;color:#111">S</span>
<div class="r" style="left:832px;top:284px;width:120px;height:1px;background:#9dbdf0;"></div>
<div class="r" style="left:832px;top:284px;width:1px;height:76px;background:#111;"></div>
<span class="t" style="left:819.0px;top:287.73px;width:11px;text-align:right;font-size:8px;line-height:10px;font-weight:400;color:#000">35</span>
<span class="t" style="left:914.0px;top:285.69px;width:20px;text-align:right;font-size:11px;line-height:13px;font-weight:400;color:#111">1</span>
<span class="t" style="left:931.0px;top:285.69px;width:20px;text-align:right;font-size:11px;line-height:13px;font-weight:400;color:#111">2</span>
<span class="t" style="left:819.0px;top:302.73px;width:11px;text-align:right;font-size:8px;line-height:10px;font-weight:400;color:#000">36</span>
<span class="t" style="left:829.0px;top:300.69px;width:20px;text-align:right;font-size:11px;line-height:13px;font-weight:400;color:#111">3</span>
<span class="t" style="left:846.0px;top:300.69px;width:20px;text-align:right;font-size:11px;line-height:13px;font-weight:400;color:#111">4</span>
<span class="t" style="left:863.0px;top:300.69px;width:20px;text-align:right;font-size:11px;line-height:13px;font-weight:400;color:#111">5</span>
<span class="t" style="left:880.0px;top:300.69px;width:20px;text-align:right;font-size:11px;line-height:13px;font-weight:400;color:#111">6</span>
<span class="t" style="left:897.0px;top:300.69px;width:20px;text-align:right;font-size:11px;line-height:13px;font-weight:400;color:#111">7</span>
<span class="t" style="left:914.0px;top:300.69px;width:20px;text-align:right;font-size:11px;line-height:13px;font-weight:400;color:#111">8</span>
<span class="t" style="left:931.0px;top:300.69px;width:20px;text-align:right;font-size:11px;line-height:13px;font-weight:400;color:#111">9</span>
<span class="t" style="left:819.0px;top:317.73px;width:11px;text-align:right;font-size:8px;line-height:10px;font-weight:400;color:#000">37</span>
<span class="t" style="left:829.0px;top:315.69px;width:20px;text-align:right;font-size:11px;line-height:13px;font-weight:400;color:#111">10</span>
<span class="t" style="left:846.0px;top:315.69px;width:20px;text-align:right;font-size:11px;line-height:13px;font-weight:400;color:#111">11</span>
<span class="t" style="left:863.0px;top:315.69px;width:20px;text-align:right;font-size:11px;line-height:13px;font-weight:400;color:#111">12</span>
<span class="t" style="left:880.0px;top:315.69px;width:20px;text-align:right;font-size:11px;line-height:13px;font-weight:400;color:#111">13</span>
<span class="t" style="left:897.0px;top:315.69px;width:20px;text-align:right;font-size:11px;line-height:13px;font-weight:400;color:#111">14</span>
<span class="t" style="left:914.0px;top:315.69px;width:20px;text-align:right;font-size:11px;line-height:13px;font-weight:400;color:#111">15</span>
<span class="t" style="left:931.0px;top:315.69px;width:20px;text-align:right;font-size:11px;line-height:13px;font-weight:400;color:#111">16</span>
<span class="t" style="left:819.0px;top:332.73px;width:11px;text-align:right;font-size:8px;line-height:10px;font-weight:400;color:#000">38</span>
<span class="t" style="left:829.0px;top:330.69px;width:20px;text-align:right;font-size:11px;line-height:13px;font-weight:400;color:#111">17</span>
<span class="t" style="left:846.0px;top:330.69px;width:20px;text-align:right;font-size:11px;line-height:13px;font-weight:400;color:#111">18</span>
<span class="t" style="left:863.0px;top:330.69px;width:20px;text-align:right;font-size:11px;line-height:13px;font-weight:400;color:#111">19</span>
<span class="t" style="left:880.0px;top:330.69px;width:20px;text-align:right;font-size:11px;line-height:13px;font-weight:400;color:#111">20</span>
<span class="t" style="left:897.0px;top:330.69px;width:20px;text-align:right;font-size:11px;line-height:13px;font-weight:400;color:#111">21</span>
<span class="t" style="left:914.0px;top:330.69px;width:20px;text-align:right;font-size:11px;line-height:13px;font-weight:400;color:#111">22</span>
<span class="t" style="left:931.0px;top:330.69px;width:20px;text-align:right;font-size:11px;line-height:13px;font-weight:400;color:#111">23</span>
<span class="t" style="left:819.0px;top:347.73px;width:11px;text-align:right;font-size:8px;line-height:10px;font-weight:400;color:#000">39</span>
<span class="t" style="left:829.0px;top:345.69px;width:20px;text-align:right;font-size:11px;line-height:13px;font-weight:400;color:#111">24</span>
<span class="t" style="left:846.0px;top:345.69px;width:20px;text-align:right;font-size:11px;line-height:13px;font-weight:400;color:#111">25</span>
<span class="t" style="left:863.0px;top:345.69px;width:20px;text-align:right;font-size:11px;line-height:13px;font-weight:400;color:#111">26</span>
<span class="t" style="left:880.0px;top:345.69px;width:20px;text-align:right;font-size:11px;line-height:13px;font-weight:400;color:#111">27</span>
<span class="t" style="left:897.0px;top:345.69px;width:20px;text-align:right;font-size:11px;line-height:13px;font-weight:400;color:#111">28</span>
<span class="t" style="left:914.0px;top:345.69px;width:20px;text-align:right;font-size:11px;line-height:13px;font-weight:400;color:#111">29</span>
<span class="t" style="left:931.0px;top:345.69px;width:20px;text-align:right;font-size:11px;line-height:13px;font-weight:400;color:#111">30</span>
<span class="t" style="left:975.2px;top:270.69px;width:14px;text-align:center;font-size:11px;line-height:13px;font-weight:400;color:#111">M</span>
<span class="t" style="left:992.2px;top:270.69px;width:14px;text-align:center;font-size:11px;line-height:13px;font-weight:400;color:#111">D</span>
<span class="t" style="left:1009.2px;top:270.69px;width:14px;text-align:center;font-size:11px;line-height:13px;font-weight:400;color:#111">M</span>
<span class="t" style="left:1026.2px;top:270.69px;width:14px;text-align:center;font-size:11px;line-height:13px;font-weight:400;color:#111">D</span>
<span class="t" style="left:1043.2px;top:270.69px;width:14px;text-align:center;font-size:11px;line-height:13px;font-weight:400;color:#111">F</span>
<span class="t" style="left:1060.2px;top:270.69px;width:14px;text-align:center;font-size:11px;line-height:13px;font-weight:400;color:#111">S</span>
<span class="t" style="left:1077.2px;top:270.69px;width:14px;text-align:center;font-size:11px;line-height:13px;font-weight:400;color:#111">S</span>
<div class="r" style="left:974px;top:284px;width:120px;height:1px;background:#9dbdf0;"></div>
<div class="r" style="left:974px;top:284px;width:1px;height:91px;background:#111;"></div>
<span class="t" style="left:961.0px;top:287.73px;width:11px;text-align:right;font-size:8px;line-height:10px;font-weight:400;color:#000">40</span>
<span class="t" style="left:971.0px;top:285.69px;width:20px;text-align:right;font-size:11px;line-height:13px;font-weight:400;color:#111">1</span>
<span class="t" style="left:988.0px;top:285.69px;width:20px;text-align:right;font-size:11px;line-height:13px;font-weight:400;color:#111">2</span>
<span class="t" style="left:1005.0px;top:285.69px;width:20px;text-align:right;font-size:11px;line-height:13px;font-weight:400;color:#111">3</span>
<span class="t" style="left:1022.0px;top:285.69px;width:20px;text-align:right;font-size:11px;line-height:13px;font-weight:400;color:#111">4</span>
<span class="t" style="left:1039.0px;top:285.69px;width:20px;text-align:right;font-size:11px;line-height:13px;font-weight:400;color:#111">5</span>
<span class="t" style="left:1056.0px;top:285.69px;width:20px;text-align:right;font-size:11px;line-height:13px;font-weight:400;color:#111">6</span>
<span class="t" style="left:1073.0px;top:285.69px;width:20px;text-align:right;font-size:11px;line-height:13px;font-weight:400;color:#111">7</span>
<span class="t" style="left:961.0px;top:302.73px;width:11px;text-align:right;font-size:8px;line-height:10px;font-weight:400;color:#000">41</span>
<span class="t" style="left:971.0px;top:300.69px;width:20px;text-align:right;font-size:11px;line-height:13px;font-weight:400;color:#111">8</span>
<span class="t" style="left:988.0px;top:300.69px;width:20px;text-align:right;font-size:11px;line-height:13px;font-weight:400;color:#111">9</span>
<span class="t" style="left:1005.0px;top:300.69px;width:20px;text-align:right;font-size:11px;line-height:13px;font-weight:400;color:#111">10</span>
<span class="t" style="left:1022.0px;top:300.69px;width:20px;text-align:right;font-size:11px;line-height:13px;font-weight:400;color:#111">11</span>
<span class="t" style="left:1039.0px;top:300.69px;width:20px;text-align:right;font-size:11px;line-height:13px;font-weight:400;color:#111">12</span>
<span class="t" style="left:1056.0px;top:300.69px;width:20px;text-align:right;font-size:11px;line-height:13px;font-weight:400;color:#111">13</span>
<span class="t" style="left:1073.0px;top:300.69px;width:20px;text-align:right;font-size:11px;line-height:13px;font-weight:400;color:#111">14</span>
<span class="t" style="left:961.0px;top:317.73px;width:11px;text-align:right;font-size:8px;line-height:10px;font-weight:400;color:#000">42</span>
<span class="t" style="left:971.0px;top:315.69px;width:20px;text-align:right;font-size:11px;line-height:13px;font-weight:400;color:#111">15</span>
<span class="t" style="left:988.0px;top:315.69px;width:20px;text-align:right;font-size:11px;line-height:13px;font-weight:400;color:#111">16</span>
<span class="t" style="left:1005.0px;top:315.69px;width:20px;text-align:right;font-size:11px;line-height:13px;font-weight:400;color:#111">17</span>
<span class="t" style="left:1022.0px;top:315.69px;width:20px;text-align:right;font-size:11px;line-height:13px;font-weight:400;color:#111">18</span>
<span class="t" style="left:1039.0px;top:315.69px;width:20px;text-align:right;font-size:11px;line-height:13px;font-weight:400;color:#111">19</span>
<span class="t" style="left:1056.0px;top:315.69px;width:20px;text-align:right;font-size:11px;line-height:13px;font-weight:400;color:#111">20</span>
<span class="t" style="left:1073.0px;top:315.69px;width:20px;text-align:right;font-size:11px;line-height:13px;font-weight:400;color:#111">21</span>
<span class="t" style="left:961.0px;top:332.73px;width:11px;text-align:right;font-size:8px;line-height:10px;font-weight:400;color:#000">43</span>
<span class="t" style="left:971.0px;top:330.69px;width:20px;text-align:right;font-size:11px;line-height:13px;font-weight:400;color:#111">22</span>
<span class="t" style="left:988.0px;top:330.69px;width:20px;text-align:right;font-size:11px;line-height:13px;font-weight:400;color:#111">23</span>
<span class="t" style="left:1005.0px;top:330.69px;width:20px;text-align:right;font-size:11px;line-height:13px;font-weight:400;color:#111">24</span>
<span class="t" style="left:1022.0px;top:330.69px;width:20px;text-align:right;font-size:11px;line-height:13px;font-weight:400;color:#111">25</span>
<span class="t" style="left:1039.0px;top:330.69px;width:20px;text-align:right;font-size:11px;line-height:13px;font-weight:400;color:#111">26</span>
<span class="t" style="left:1056.0px;top:330.69px;width:20px;text-align:right;font-size:11px;line-height:13px;font-weight:400;color:#111">27</span>
<span class="t" style="left:1073.0px;top:330.69px;width:20px;text-align:right;font-size:11px;line-height:13px;font-weight:400;color:#111">28</span>
<span class="t" style="left:961.0px;top:347.73px;width:11px;text-align:right;font-size:8px;line-height:10px;font-weight:400;color:#000">44</span>
<span class="t" style="left:971.0px;top:345.69px;width:20px;text-align:right;font-size:11px;line-height:13px;font-weight:400;color:#111">29</span>
<span class="t" style="left:988.0px;top:345.69px;width:20px;text-align:right;font-size:11px;line-height:13px;font-weight:400;color:#111">30</span>
<span class="t" style="left:1005.0px;top:345.69px;width:20px;text-align:right;font-size:11px;line-height:13px;font-weight:400;color:#111">31</span>
<span class="t" style="left:1022.0px;top:345.69px;width:20px;text-align:right;font-size:11px;line-height:13px;font-weight:400;color:#808080">1</span>
<span class="t" style="left:1039.0px;top:345.69px;width:20px;text-align:right;font-size:11px;line-height:13px;font-weight:400;color:#808080">2</span>
<span class="t" style="left:1056.0px;top:345.69px;width:20px;text-align:right;font-size:11px;line-height:13px;font-weight:400;color:#808080">3</span>
<span class="t" style="left:1073.0px;top:345.69px;width:20px;text-align:right;font-size:11px;line-height:13px;font-weight:400;color:#808080">4</span>
<span class="t" style="left:961.0px;top:362.73px;width:11px;text-align:right;font-size:8px;line-height:10px;font-weight:400;color:#000">45</span>
<span class="t" style="left:971.0px;top:360.69px;width:20px;text-align:right;font-size:11px;line-height:13px;font-weight:400;color:#808080">5</span>
<span class="t" style="left:988.0px;top:360.69px;width:20px;text-align:right;font-size:11px;line-height:13px;font-weight:400;color:#808080">6</span>
<span class="t" style="left:1005.0px;top:360.69px;width:20px;text-align:right;font-size:11px;line-height:13px;font-weight:400;color:#808080">7</span>
<span class="t" style="left:1022.0px;top:360.69px;width:20px;text-align:right;font-size:11px;line-height:13px;font-weight:400;color:#808080">8</span>
<span class="t" style="left:1039.0px;top:360.69px;width:20px;text-align:right;font-size:11px;line-height:13px;font-weight:400;color:#808080">9</span>
<span class="t" style="left:1056.0px;top:360.69px;width:20px;text-align:right;font-size:11px;line-height:13px;font-weight:400;color:#808080">10</span>
<span class="t" style="left:1073.0px;top:360.69px;width:20px;text-align:right;font-size:11px;line-height:13px;font-weight:400;color:#808080">11</span>
<svg class="abs" style="left:822px;top:134px" width="6" height="9" viewBox="0 0 6 9"><polygon points="0.5,4.5 5,0.5 5,8.5" fill="#7da0dc"/></svg>
<svg class="abs" style="left:1092px;top:134px" width="6" height="9" viewBox="0 0 6 9"><polygon points="5.5,4.5 1,0.5 1,8.5" fill="#7da0dc"/></svg>
<div class="r" style="left:764px;top:412px;width:392px;height:1px;background:#b9b9b9;"></div>
<div class="r" style="left:764px;top:412px;width:1px;height:136px;background:#b9b9b9;"></div>
<div class="r" style="left:765px;top:547px;width:391px;height:1px;background:#b9b9b9;"></div>
<div class="r" style="left:765px;top:414px;width:391px;height:16px;background:#0c56a6;"></div>
<div class="r" style="left:765px;top:430px;width:373px;height:32px;background:#eaf1fb;"></div>
<div class="r" style="left:765px;top:462px;width:373px;height:43px;background:#fff;"></div>
<div class="r" style="left:765px;top:505px;width:373px;height:26px;background:#eaf1fb;"></div>
<div class="r" style="left:770px;top:442px;width:8px;height:8px;background:transparent;border:1px solid #7f9ccc"></div>
<div class="r" style="left:770px;top:479px;width:8px;height:8px;background:transparent;border:1px solid #7f9ccc"></div>
<div class="r" style="left:770px;top:522px;width:8px;height:8px;background:transparent;border:1px solid #7f9ccc"></div>
<div class="r" style="left:1070px;top:442px;width:8px;height:8px;background:#ffcc00;border-radius:50%"></div>
<div class="r" style="left:1070px;top:479px;width:8px;height:8px;background:#00cc00;border-radius:50%"></div>
<div class="r" style="left:1070px;top:522px;width:8px;height:8px;background:#00cc00;border-radius:50%"></div>
<div class="r" style="left:1138px;top:430px;width:17px;height:101px;background:#e8e8e8;"></div>
<div class="r" style="left:1138px;top:431px;width:17px;height:16px;background:#fff;border:1px solid #adadad"></div>
<div class="r" style="left:1138px;top:456px;width:17px;height:24px;background:#fff;border:1px solid #adadad"></div>
<div class="r" style="left:1138px;top:514px;width:17px;height:17px;background:#fff;border:1px solid #adadad"></div>
<svg class="abs" style="left:1143px;top:437px" width="8" height="4" viewBox="0 0 8 4"><polygon points="0,4 8,4 4,0" fill="#606060"/></svg>
<svg class="abs" style="left:1143px;top:521px" width="8" height="4" viewBox="0 0 8 4"><polygon points="0,0 8,0 4,4" fill="#606060"/></svg>
<div class="r" style="left:765px;top:531px;width:391px;height:16px;background:#e8e8e8;z-index:3;"></div>
<div class="r" style="left:1138px;top:531px;width:18px;height:16px;background:#f0f0f0;z-index:3;"></div>
<div class="r" style="left:765px;top:531px;width:17px;height:16px;background:#fff;z-index:3;border:1px solid #adadad"></div>
<div class="r" style="left:782px;top:531px;width:332px;height:16px;background:#fff;z-index:3;border:1px solid #adadad"></div>
<div class="r" style="left:1121px;top:531px;width:17px;height:16px;background:#fff;z-index:3;border:1px solid #adadad"></div>
<svg class="abs" style="z-index:4;left:771px;top:535px" width="4" height="8" viewBox="0 0 4 8"><polygon points="4,0 4,8 0,4" fill="#606060"/></svg>
<svg class="abs" style="z-index:4;left:1128px;top:535px" width="4" height="8" viewBox="0 0 4 8"><polygon points="0,0 0,8 4,4" fill="#606060"/></svg>
<div class="r" style="left:765px;top:547px;width:391px;height:1px;background:#b9b9b9;z-index:3;"></div>
<svg class="abs" style="left:456px;top:6px" width="14" height="16" viewBox="0 0 14 16"><path d="M1.5 1.5 H9 L12.5 5 V15.5 H1.5 Z" fill="#fff" stroke="#4a80c4" stroke-width="1"/><path d="M9 1.5 V5 H12.5" fill="none" stroke="#4a80c4" stroke-width="1"/></svg>
<svg class="abs" style="left:454px;top:29px" width="18" height="17" viewBox="0 0 18 17"><path d="M2 3.5 C6 5.5 11 10 14 14.5" fill="none" stroke="#8e8e8e" stroke-width="2.2" stroke-linecap="round"/><path d="M15.5 2 C10 5 5 10 3 14.5" fill="none" stroke="#8e8e8e" stroke-width="2.2" stroke-linecap="round"/></svg>
<svg class="abs" style="left:455px;top:53px" width="16" height="18" viewBox="0 0 16 18"><path d="M8 3 A6 6 0 0 0 4 13.5" fill="none" stroke="#1458a6" stroke-width="1.5"/><path d="M8 15 A6 6 0 0 0 12 4.5" fill="none" stroke="#1458a6" stroke-width="1.5"/><path d="M6.5 0.8 L9 3 L6.5 5.5" fill="none" stroke="#1458a6" stroke-width="1.5"/><path d="M9.5 12.5 L7 15 L9.5 17.2" fill="none" stroke="#1458a6" stroke-width="1.5"/></svg>
<svg class="abs" style="left:634px;top:6px" width="30" height="30" viewBox="0 0 30 30"><path d="M6 12 V1 H19 L24.5 6.5 V12" fill="#fff" stroke="#1458a6" stroke-width="2"/>
<path d="M18.5 1 V7 H24.5" fill="none" stroke="#1458a6" stroke-width="1.6"/>
<path d="M3 11.5 H27 Q29.5 11.5 29.5 14 V23 Q29.5 25.5 27 25.5 H3 Q0.5 25.5 0.5 23 V14 Q0.5 11.5 3 11.5 Z" fill="#1458a6"/>
<path d="M3 15.5 H27 V23 H3 Z" fill="#fff"/>
<rect x="6" y="19.5" width="18.5" height="9.5" fill="#fff" stroke="#1458a6" stroke-width="2"/></svg>
<svg class="abs" style="left:646px;top:63px" width="6" height="4" viewBox="0 0 6 4"><polygon points="0,0 6,0 3,3.5" fill="#444"/></svg>
<svg class="abs" style="left:708px;top:6px" width="28" height="31" viewBox="0 0 28 31"><path d="M5.5 1 H20.5 L26.5 7 V28.5 H5.5 Z" fill="#fff" stroke="#1458a6" stroke-width="1.2"/>
<path d="M20.5 1 V7 H26.5" fill="none" stroke="#1458a6" stroke-width="1.2"/>
<circle cx="15.5" cy="16" r="6.6" fill="#fff" stroke="#1458a6" stroke-width="1.2"/>
<path d="M9 22 L2.5 28.5" stroke="#1458a6" stroke-width="3.4" stroke-linecap="butt"/></svg>
<svg class="abs" style="left:777px;top:6px" width="16" height="16" viewBox="0 0 16 16"><path d="M1.6 1.2 L3.3 1.2 L10.9 10.6 L9.7 11.5 Z" fill="#fff" stroke="#4a80c4" stroke-width="0.9" stroke-linejoin="round"/>
<path d="M13.9 1.2 L12.2 1.2 L4.6 10.6 L5.8 11.5 Z" fill="#fff" stroke="#4a80c4" stroke-width="0.9" stroke-linejoin="round"/>
<ellipse cx="3.9" cy="12.6" rx="2.2" ry="2" fill="#fff" stroke="#4a80c4" stroke-width="1"/>
<ellipse cx="11.6" cy="12.6" rx="2.2" ry="2" fill="#fff" stroke="#4a80c4" stroke-width="1"/></svg>
<svg class="abs" style="left:777px;top:30px" width="16" height="16" viewBox="0 0 16 16"><path d="M5.5 1.5 H11 L14.5 5 V11.5 H5.5 Z" fill="#fff" stroke="#4a80c4" stroke-width="1"/>
<path d="M1.5 4.5 H7 L10.5 8 V14.5 H1.5 Z" fill="#fff" stroke="#4a80c4" stroke-width="1"/>
<path d="M7 4.5 V8 H10.5" fill="none" stroke="#4a80c4" stroke-width="1"/></svg>
<svg class="abs" style="left:778px;top:53px" width="15" height="17" viewBox="0 0 15 17"><path d="M1.5 3.5 H10.5 V14.5 H1.5 Z" fill="#fff" stroke="#4a80c4" stroke-width="1"/>
<path d="M4 3.5 V2 H8 V3.5" fill="#fff" stroke="#4a80c4" stroke-width="1"/>
<rect x="5.5" y="7.5" width="7" height="8" fill="#fff" stroke="#4a80c4" stroke-width="1"/>
<path d="M7 10.5 H11 M7 12.5 H11" stroke="#4a80c4" stroke-width="1"/></svg>
<svg class="abs" style="left:891px;top:5px" width="34" height="33" viewBox="0 0 34 33"><circle cx="16" cy="16" r="14" fill="#fff" stroke="#1458a6" stroke-width="1.3"/>
<path d="M5 8 C8 5 12 3.5 15 3.5 M6 7.5 L3.5 13 L3 20 L6 26 M3.5 14 L11 19.5 L9 26 L7.5 27.5 M11 19.5 L4 16" fill="none" stroke="#1458a6" stroke-width="1.1"/>
<path d="M21 4.5 L18.5 8.5 L22 9 L24 10.5 L21.5 11.5 L19 10 L16.5 11 L15.5 14 L16.5 17.5 L19 18 L21 17 M18.5 8.5 L17 10.5 M26 8 L28 13 L28.5 17 L27 20" fill="none" stroke="#1458a6" stroke-width="1.1"/>
<circle cx="25" cy="25" r="7.4" fill="#fff"/><circle cx="25" cy="25" r="6.8" fill="#1458a6"/>
<text x="25" y="29.2" text-anchor="middle" font-family="Liberation Sans,sans-serif" font-weight="700" font-size="12.5" fill="#fff">?</text></svg>
<svg class="abs" style="left:946px;top:8px" width="30" height="26" viewBox="0 0 30 26"><rect x="1.5" y="1.5" width="27" height="23" fill="#fff" stroke="#1458a6" stroke-width="1.2"/>
<path d="M1.5 5 H28.5" stroke="#1458a6" stroke-width="1.2"/>
<circle cx="15" cy="15" r="6.8" fill="#1458a6"/>
<text x="15" y="19.2" text-anchor="middle" font-family="Liberation Sans,sans-serif" font-weight="700" font-size="12.5" fill="#fff">?</text></svg>
<svg class="abs" style="left:1000px;top:6px" width="14" height="16" viewBox="0 0 14 16"><path d="M1.5 1.5 H9 L12.5 5 V14.5 H1.5 Z" fill="#fff" stroke="#4a80c4" stroke-width="1"/>
<circle cx="7.2" cy="9.7" r="4.3" fill="#e8141c"/>
<text x="7.2" y="12.6" text-anchor="middle" font-family="Liberation Sans,sans-serif" font-weight="700" font-size="8" fill="#fff">?</text></svg>
<svg class="abs" style="left:999px;top:30px" width="16" height="16" viewBox="0 0 16 16"><rect x="1.5" y="1.5" width="7" height="5.5" fill="#fff" stroke="#4a80c4" stroke-width="1"/>
<path d="M3.5 7 V13.5 H7.5" fill="none" stroke="#4a80c4" stroke-width="1"/>
<rect x="7.5" y="8.5" width="7.5" height="6" fill="#fff" stroke="#4a80c4" stroke-width="1"/>
<path d="M3 7.5 H7 M9.5 15 H13" stroke="#1458a6" stroke-width="1"/></svg>
<svg class="abs" style="left:999px;top:54px" width="16" height="16" viewBox="0 0 16 16"><circle cx="8" cy="8" r="6.8" fill="#fff" stroke="#1458a6" stroke-width="1.2"/>
<text x="8" y="12.3" text-anchor="middle" font-family="Liberation Serif,serif" font-weight="700" font-size="12.5" fill="#1458a6">i</text></svg>
<svg class="abs" style="left:1134px;top:81px" width="12" height="8" viewBox="0 0 12 8"><path d="M1.5 6.5 L5.5 2 L9.5 6.5" fill="none" stroke="#666" stroke-width="2.1"/></svg>
<span class="t" id="t0" style="left:22.08px;top:40.84px;font-size:12px;line-height:16px;font-weight:400;color:#444;font-family:'Liberation Sans',sans-serif;letter-spacing:0.095px;">Heute</span>
<span class="t" id="t1" style="left:88.54px;top:40.84px;font-size:12px;line-height:16px;font-weight:400;color:#444;font-family:'Liberation Sans',sans-serif;letter-spacing:-0.550px;">Tag</span>
<span class="t" id="t2" style="left:123.02px;top:40.84px;font-size:12px;line-height:16px;font-weight:400;color:#444;font-family:'Liberation Sans',sans-serif;letter-spacing:-0.005px;">Arbeitswoche</span>
<span class="t" id="t3" style="left:207.12px;top:40.84px;font-size:12px;line-height:16px;font-weight:400;color:#444;font-family:'Liberation Sans',sans-serif;letter-spacing:-0.053px;">Kalenderwoche</span>
<span class="t" id="t4" style="left:302.14px;top:40.84px;font-size:12px;line-height:16px;font-weight:400;color:#444;font-family:'Liberation Sans',sans-serif;letter-spacing:0.480px;">Monat</span>
<span class="t" id="t5" style="left:349.58px;top:40.84px;font-size:12px;line-height:16px;font-weight:400;color:#444;font-family:'Liberation Sans',sans-serif;letter-spacing:-0.004px;">Planungsansicht</span>
<span class="t" id="t6" style="left:16.04px;top:75.84px;font-size:12px;line-height:16px;font-weight:400;color:#666;font-family:'Liberation Sans',sans-serif;letter-spacing:-0.437px;">Gehe Zu</span>
<span class="t" id="t7" style="left:241.00px;top:75.84px;font-size:12px;line-height:16px;font-weight:400;color:#666;font-family:'Liberation Sans',sans-serif;letter-spacing:0.150px;">Ansicht</span>
<span class="t" id="t8" style="left:479.60px;top:5.84px;font-size:12px;line-height:16px;font-weight:400;color:#444;font-family:'Liberation Sans',sans-serif;letter-spacing:0.084px;">Neuer Termin/Aufgabe</span>
<span class="t" id="t9" style="left:479.00px;top:29.54px;font-size:12px;line-height:16px;font-weight:400;color:#8a8a8a;font-family:'Liberation Sans',sans-serif;letter-spacing:-0.193px;">Termine Löschen</span>
<span class="t" id="t10" style="left:478.48px;top:53.54px;font-size:12px;line-height:16px;font-weight:400;color:#444;font-family:'Liberation Sans',sans-serif;letter-spacing:-0.097px;">Aktualisieren</span>
<span class="t" id="t11" style="left:504.62px;top:75.84px;font-size:12px;line-height:16px;font-weight:400;color:#666;font-family:'Liberation Sans',sans-serif;letter-spacing:-0.330px;">Datensatz</span>
<span class="t" id="t12" style="left:626.14px;top:40.84px;font-size:12px;line-height:16px;font-weight:400;color:#444;font-family:'Liberation Sans',sans-serif;letter-spacing:-0.130px;">Drucken</span>
<span class="t" id="t13" style="left:687.10px;top:40.84px;font-size:12px;line-height:16px;font-weight:400;color:#444;font-family:'Liberation Sans',sans-serif;letter-spacing:-0.075px;">Seitenansicht</span>
<span class="t" id="t14" style="left:668.10px;top:75.84px;font-size:12px;line-height:16px;font-weight:400;color:#666;font-family:'Liberation Sans',sans-serif;letter-spacing:0.000px;">Drucken</span>
<span class="t" id="t15" style="left:800.50px;top:5.84px;font-size:12px;line-height:16px;font-weight:400;color:#444;font-family:'Liberation Sans',sans-serif;letter-spacing:-0.227px;">Ausschneiden</span>
<span class="t" id="t16" style="left:799.60px;top:29.54px;font-size:12px;line-height:16px;font-weight:400;color:#444;font-family:'Liberation Sans',sans-serif;letter-spacing:-0.157px;">Kopieren</span>
<span class="t" id="t17" style="left:799.60px;top:53.54px;font-size:12px;line-height:16px;font-weight:400;color:#444;font-family:'Liberation Sans',sans-serif;letter-spacing:-0.029px;">Einfügen</span>
<span class="t" id="t18" style="left:785.00px;top:75.84px;font-size:12px;line-height:16px;font-weight:400;color:#666;font-family:'Liberation Sans',sans-serif;letter-spacing:-0.138px;">Zwischenablage</span>
<span class="t" id="t19" style="left:893.62px;top:40.84px;font-size:12px;line-height:16px;font-weight:400;color:#444;font-family:'Liberation Sans',sans-serif;letter-spacing:0.465px;">Hilfe</span>
<span class="t" id="t20" style="left:931.58px;top:40.84px;font-size:12px;line-height:16px;font-weight:400;color:#444;font-family:'Liberation Sans',sans-serif;letter-spacing:0.493px;">Modulhilfe</span>
<span class="t" id="t21" style="left:1022.06px;top:5.84px;font-size:12px;line-height:16px;font-weight:400;color:#444;font-family:'Liberation Sans',sans-serif;letter-spacing:0.140px;">interne Hilfe</span>
<span class="t" id="t22" style="left:1022.06px;top:29.54px;font-size:12px;line-height:16px;font-weight:400;color:#444;font-family:'Liberation Sans',sans-serif;letter-spacing:-0.018px;">Fernwartung</span>
<span class="t" id="t23" style="left:1020.10px;top:53.54px;font-size:12px;line-height:16px;font-weight:400;color:#444;font-family:'Liberation Sans',sans-serif;letter-spacing:0.560px;">Info</span>
<span class="t" id="t24" style="left:954.06px;top:75.84px;font-size:12px;line-height:16px;font-weight:400;color:#666;font-family:'Liberation Sans',sans-serif;letter-spacing:0.140px;">Hilfe und Web</span>
<span class="t" id="t25" style="left:57.68px;top:104.26px;font-size:18px;line-height:24px;font-weight:400;color:#111;font-family:'Liberation Sans',sans-serif;letter-spacing:0.147px;">12. Juli 2018 KW 28/18</span>
<span class="t" id="t26" style="left:449.60px;top:111.39px;font-size:11px;line-height:15px;font-weight:400;color:#111;font-family:'Liberation Sans',sans-serif;letter-spacing:0.064px;">Mitarbeiter</span>
<span class="t" id="t27" style="left:542.62px;top:111.39px;font-size:11px;line-height:15px;font-weight:400;color:#111;font-family:'Liberation Sans',sans-serif;letter-spacing:0.039px;">Kunze, Sandra; Mustermann, Fritz</span>
<span class="t" id="t28" style="left:193.08px;top:141.19px;font-size:11px;line-height:15px;font-weight:400;color:#111;font-family:'Liberation Sans',sans-serif;letter-spacing:-0.203px;">Kunze, Sandra</span>
<span class="t" id="t29" style="left:521.06px;top:141.39px;font-size:11px;line-height:15px;font-weight:700;color:#111;font-family:'Liberation Sans',sans-serif;letter-spacing:0.490px;-webkit-text-stroke:0.25px #111;">Mustermann, Fritz</span>
<span class="t" id="t30" style="left:60.02px;top:158.69px;font-size:11px;line-height:15px;font-weight:700;color:#111;font-family:'Liberation Sans',sans-serif;letter-spacing:0.900px;-webkit-text-stroke:0.25px #111;">12</span>
<span class="t" id="t31" style="left:199.14px;top:157.69px;font-size:11px;line-height:15px;font-weight:400;color:#222;font-family:'Liberation Sans',sans-serif;letter-spacing:0.113px;">Donnerstag</span>
<span class="t" id="t32" style="left:404.00px;top:158.69px;font-size:11px;line-height:15px;font-weight:700;color:#111;font-family:'Liberation Sans',sans-serif;letter-spacing:0.900px;-webkit-text-stroke:0.25px #111;">12</span>
<span class="t" id="t33" style="left:543.60px;top:157.69px;font-size:11px;line-height:15px;font-weight:400;color:#222;font-family:'Liberation Sans',sans-serif;letter-spacing:0.078px;">Donnerstag</span>
<span class="t" id="t34" style="left:102.98px;top:390.89px;font-size:11px;line-height:15px;font-weight:700;color:#111;font-family:'Liberation Sans',sans-serif;letter-spacing:0.665px;-webkit-text-stroke:0.25px #111;">eMail (70032 FM)</span>
<span class="t" id="t35" style="left:10.04px;top:204.72px;font-size:21px;line-height:27px;font-weight:400;color:#6b8fc9;font-family:'Liberation Sans',sans-serif;letter-spacing:0.900px;">07</span>
<span class="t" id="t36" style="left:39.52px;top:208.53px;font-size:10px;line-height:14px;font-weight:400;color:#6b8fc9;font-family:'Liberation Sans',sans-serif;letter-spacing:0.400px;">00</span>
<span class="t" id="t37" style="left:10.04px;top:250.72px;font-size:21px;line-height:27px;font-weight:400;color:#6b8fc9;font-family:'Liberation Sans',sans-serif;letter-spacing:0.900px;">08</span>
<span class="t" id="t38" style="left:39.52px;top:254.53px;font-size:10px;line-height:14px;font-weight:400;color:#6b8fc9;font-family:'Liberation Sans',sans-serif;letter-spacing:0.400px;">00</span>
<span class="t" id="t39" style="left:10.04px;top:296.72px;font-size:21px;line-height:27px;font-weight:400;color:#6b8fc9;font-family:'Liberation Sans',sans-serif;letter-spacing:0.900px;">09</span>
<span class="t" id="t40" style="left:39.52px;top:300.53px;font-size:10px;line-height:14px;font-weight:400;color:#6b8fc9;font-family:'Liberation Sans',sans-serif;letter-spacing:0.400px;">00</span>
<span class="t" id="t41" style="left:10.04px;top:342.72px;font-size:21px;line-height:27px;font-weight:400;color:#6b8fc9;font-family:'Liberation Sans',sans-serif;letter-spacing:0.900px;">10</span>
<span class="t" id="t42" style="left:39.52px;top:346.53px;font-size:10px;line-height:14px;font-weight:400;color:#6b8fc9;font-family:'Liberation Sans',sans-serif;letter-spacing:0.400px;">00</span>
<span class="t" id="t43" style="left:10.04px;top:388.72px;font-size:21px;line-height:27px;font-weight:400;color:#6b8fc9;font-family:'Liberation Sans',sans-serif;letter-spacing:0.900px;">11</span>
<span class="t" id="t44" style="left:39.52px;top:392.53px;font-size:10px;line-height:14px;font-weight:400;color:#6b8fc9;font-family:'Liberation Sans',sans-serif;letter-spacing:0.400px;">00</span>
<span class="t" id="t45" style="left:10.04px;top:434.72px;font-size:21px;line-height:27px;font-weight:400;color:#6b8fc9;font-family:'Liberation Sans',sans-serif;letter-spacing:0.900px;">12</span>
<span class="t" id="t46" style="left:39.52px;top:438.53px;font-size:10px;line-height:14px;font-weight:400;color:#6b8fc9;font-family:'Liberation Sans',sans-serif;letter-spacing:0.400px;">00</span>
<span class="t" id="t47" style="left:10.04px;top:480.72px;font-size:21px;line-height:27px;font-weight:400;color:#6b8fc9;font-family:'Liberation Sans',sans-serif;letter-spacing:0.900px;">13</span>
<span class="t" id="t48" style="left:39.52px;top:484.53px;font-size:10px;line-height:14px;font-weight:400;color:#6b8fc9;font-family:'Liberation Sans',sans-serif;letter-spacing:0.400px;">00</span>
<span class="t" id="t49" style="left:10.04px;top:526.72px;font-size:21px;line-height:27px;font-weight:400;color:#6b8fc9;font-family:'Liberation Sans',sans-serif;letter-spacing:0.900px;">14</span>
<span class="t" id="t50" style="left:39.52px;top:530.53px;font-size:10px;line-height:14px;font-weight:400;color:#6b8fc9;font-family:'Liberation Sans',sans-serif;letter-spacing:0.400px;">00</span>
<span class="t" id="t51" style="left:767.48px;top:414.59px;font-size:11px;line-height:15px;font-weight:400;color:#fff;font-family:'Liberation Sans',sans-serif;letter-spacing:-0.137px;">Aufgaben</span>
<span class="t" id="t52" style="left:787.06px;top:432.69px;font-size:11px;line-height:15px;font-weight:400;color:#111;font-family:'Liberation Sans',sans-serif;letter-spacing:0.115px;">nicht</span>
<span class="t" id="t53" style="left:787.06px;top:445.69px;font-size:11px;line-height:15px;font-weight:400;color:#111;font-family:'Liberation Sans',sans-serif;letter-spacing:-0.109px;">begonnen</span>
<span class="t" id="t54" style="left:871.06px;top:432.69px;font-size:11px;line-height:15px;font-weight:400;color:#111;font-family:'Liberation Sans',sans-serif;letter-spacing:0.067px;">FirmenBesuch (70032 FM)</span>
<span class="t" id="t55" style="left:871.06px;top:445.69px;font-size:11px;line-height:15px;font-weight:400;color:#111;font-family:'Liberation Sans',sans-serif;letter-spacing:0.153px;">Firma: FM</span>
<span class="t" id="t56" style="left:1087.00px;top:432.69px;font-size:11px;line-height:15px;font-weight:400;color:#111;font-family:'Liberation Sans',sans-serif;letter-spacing:-0.040px;">sehr</span>
<span class="t" id="t57" style="left:1087.46px;top:445.69px;font-size:11px;line-height:15px;font-weight:400;color:#111;font-family:'Liberation Sans',sans-serif;letter-spacing:0.193px;">wichtig</span>
<span class="t" id="t58" style="left:787.06px;top:463.69px;font-size:11px;line-height:15px;font-weight:400;color:#111;font-family:'Liberation Sans',sans-serif;letter-spacing:0.115px;">nicht</span>
<span class="t" id="t59" style="left:787.06px;top:476.69px;font-size:11px;line-height:15px;font-weight:400;color:#111;font-family:'Liberation Sans',sans-serif;letter-spacing:-0.109px;">begonnen</span>
<span class="t" id="t60" style="left:871.06px;top:463.69px;font-size:11px;line-height:15px;font-weight:400;color:#111;font-family:'Liberation Sans',sans-serif;letter-spacing:0.016px;">Präsentation (69999 SWC GmbH)</span>
<span class="t" id="t61" style="left:871.06px;top:476.69px;font-size:11px;line-height:15px;font-weight:400;color:#111;font-family:'Liberation Sans',sans-serif;letter-spacing:0.014px;">Firma: SWC GmbH</span>
<span class="t" id="t62" style="left:871.06px;top:488.69px;font-size:11px;line-height:15px;font-weight:400;color:#111;font-family:'Liberation Sans',sans-serif;letter-spacing:0.012px;">Projekt: Programmeinführung CO</span>
<span class="t" id="t63" style="left:1087.46px;top:463.69px;font-size:11px;line-height:15px;font-weight:400;color:#111;font-family:'Liberation Sans',sans-serif;letter-spacing:0.193px;">wichtig</span>
<span class="t" id="t64" style="left:787.06px;top:506.69px;font-size:11px;line-height:15px;font-weight:400;color:#111;font-family:'Liberation Sans',sans-serif;letter-spacing:0.115px;">nicht</span>
<span class="t" id="t65" style="left:787.06px;top:519.69px;font-size:11px;line-height:15px;font-weight:400;color:#111;font-family:'Liberation Sans',sans-serif;letter-spacing:-0.109px;">begonnen</span>
<span class="t" id="t66" style="left:871.06px;top:506.69px;font-size:11px;line-height:15px;font-weight:400;color:#111;font-family:'Liberation Sans',sans-serif;letter-spacing:-0.004px;">Schulung (12 Apotheke Mu/Herbert</span>
<span class="t" id="t67" style="left:871.06px;top:519.69px;font-size:11px;line-height:15px;font-weight:400;color:#111;font-family:'Liberation Sans',sans-serif;letter-spacing:0.058px;">Mustermann)</span>
<span class="t" id="t68" style="left:1087.46px;top:506.69px;font-size:11px;line-height:15px;font-weight:400;color:#111;font-family:'Liberation Sans',sans-serif;letter-spacing:0.193px;">wichtig</span>
<span class="t" id="t69" style="left:873.00px;top:130.69px;font-size:11px;line-height:15px;font-weight:400;color:#111;font-family:'Liberation Sans',sans-serif;letter-spacing:0.113px;">Juli 2018</span>
<span class="t" id="t70" style="left:992.52px;top:130.69px;font-size:11px;line-height:15px;font-weight:400;color:#111;font-family:'Liberation Sans',sans-serif;letter-spacing:0.006px;">August 2018</span>
<span class="t" id="t71" style="left:849.02px;top:254.69px;font-size:11px;line-height:15px;font-weight:400;color:#111;font-family:'Liberation Sans',sans-serif;letter-spacing:-0.114px;">September 2018</span>
<span class="t" id="t72" style="left:998.02px;top:254.69px;font-size:11px;line-height:15px;font-weight:400;color:#111;font-family:'Liberation Sans',sans-serif;letter-spacing:0.018px;">Oktober 2018</span>
</body></html>
